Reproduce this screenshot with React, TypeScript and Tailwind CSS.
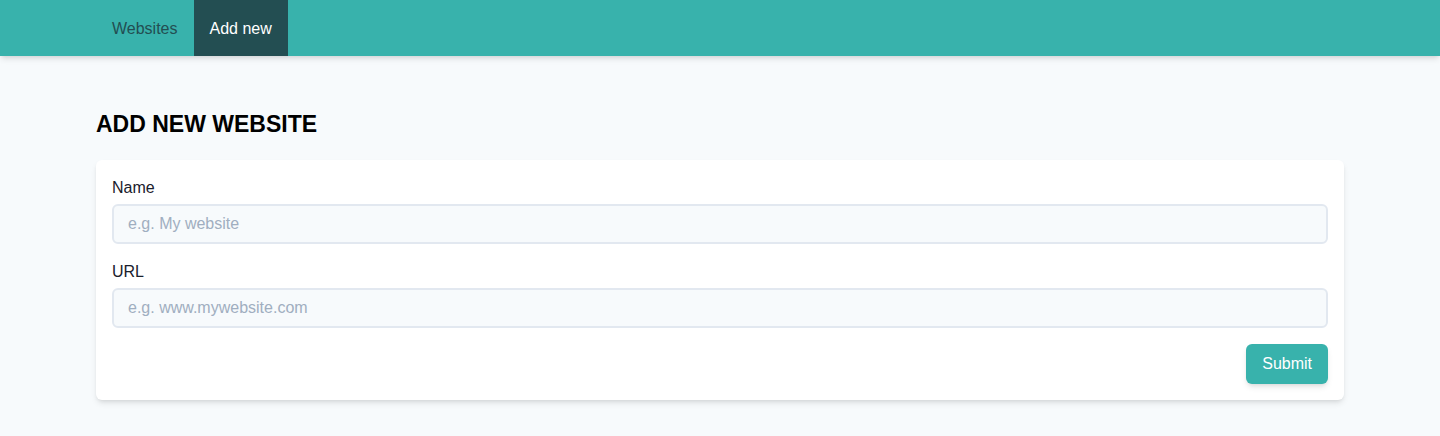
import { useState } from "react";

export default function App() {
  const [name, setName] = useState("");
  const [url, setUrl] = useState("");

  return (
    <div className="min-h-screen bg-[#f7fafc] font-['Liberation_Sans',Arial,sans-serif] text-[#1a202c]">
      <nav className="h-14 bg-[#38b2ac] shadow-md">
        <div className="flex h-full px-24">
          <a className="flex items-center px-4 pt-0.5 text-base text-[#234e52]">Websites</a>
          <a className="flex items-center bg-[#234e52] px-4 pt-0.5 text-base text-white">Add new</a>
        </div>
      </nav>

      <main className="px-24 pt-[52px]">
        <h1 className="mb-[20px] text-[23px] font-bold leading-8 text-black">ADD NEW WEBSITE</h1>

        <form
          className="rounded-md bg-white p-4 shadow-md"
          onSubmit={(e) => {
            e.preventDefault();
          }}>
          <label htmlFor="name" className="mb-1 block text-base leading-6 text-[#1a202c]">
            Name
          </label>
          <input
            id="name"
            value={name}
            onChange={(e) => setName(e.target.value)}
            placeholder="e.g. My website"
            className="block h-10 w-full rounded-md border-2 border-[#e2e8f0] bg-[#f7fafc] px-[14px] text-base text-[#4a5568] placeholder-[#a0aec0] outline-none"
          />

          <label htmlFor="url" className="mb-1 mt-4 block text-base leading-6 text-[#1a202c]">
            URL
          </label>
          <input
            id="url"
            value={url}
            onChange={(e) => setUrl(e.target.value)}
            placeholder="e.g. www.mywebsite.com"
            className="block h-10 w-full rounded-md border-2 border-[#e2e8f0] bg-[#f7fafc] px-[14px] text-base text-[#4a5568] placeholder-[#a0aec0] outline-none"
          />

          <div className="mt-4 flex justify-end">
            <button type="submit" className="h-10 rounded-md bg-[#38b2ac] px-4 text-base text-white shadow-md">
              Submit
            </button>
          </div>
        </form>
      </main>
    </div>
  );
}
